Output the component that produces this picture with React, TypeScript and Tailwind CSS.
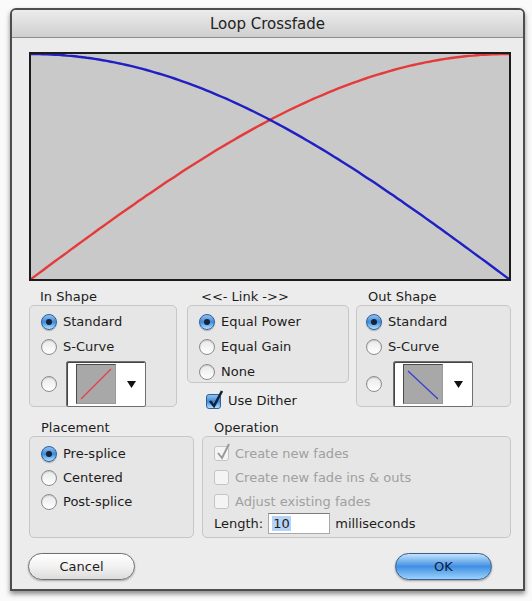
import React from 'react';

const W = 478;
const H = 225;

// equal power crossfade curves
function curve(fn: (t: number) => number) {
  const pts: string[] = [];
  for (let i = 0; i <= 120; i++) {
    const t = i / 120;
    pts.push(`${(t * W).toFixed(1)},${(H * (1 - fn(t))).toFixed(1)}`);
  }
  return pts.join(' ');
}

function Radio({ on }: { on?: boolean }) {
  if (on) {
    return (
      <span className="flex h-[16px] w-[16px] shrink-0 items-center justify-center rounded-full border border-[#2f5f9c] bg-linear-to-b from-[#8fc1ef] via-[#3d8ad8] to-[#b4e2ff] shadow-[0_1px_1px_rgba(0,0,0,0.25)]">
        <span className="h-[6px] w-[6px] rounded-full bg-[#15243a]" />
      </span>
    );
  }
  return (
    <span className="h-[16px] w-[16px] shrink-0 rounded-full border border-[#8c8c8c] bg-linear-to-b from-[#e9e9e9] to-[#ffffff] shadow-[inset_0_1px_1px_rgba(0,0,0,0.15)]" />
  );
}

function RadioRow({ on, label }: { on?: boolean; label: string }) {
  return (
    <div className="flex h-[17px] items-center gap-[6px]">
      <Radio on={on} />
      <span>{label}</span>
    </div>
  );
}

function Check({ on, disabled }: { on?: boolean; disabled?: boolean }) {
  if (disabled) {
    return (
      <span className="relative h-[15px] w-[15px] shrink-0 rounded-[3px] border border-[#c4c4c4] bg-[#f4f4f4]">
        {on && (
          <svg className="absolute -top-[4px] left-[1px]" width="16" height="18" viewBox="0 0 16 18">
            <path d="M2 10 L6 15 L13 1" fill="none" stroke="#9a9a9a" strokeWidth="2" />
          </svg>
        )}
      </span>
    );
  }
  return (
    <span className="relative h-[15px] w-[15px] shrink-0 rounded-[3px] border border-[#2f5f9c] bg-linear-to-b from-[#8fc1ef] via-[#3d8ad8] to-[#b4e2ff]">
      {on && (
        <svg className="absolute -top-[5px] left-[1px]" width="16" height="19" viewBox="0 0 16 19">
          <path d="M2 11 L6 16 L14 1" fill="none" stroke="#14213a" strokeWidth="2.6" />
        </svg>
      )}
    </span>
  );
}

function ShapePicker({ color, down }: { color: string; down?: boolean }) {
  return (
    <div className="flex h-[46px] w-[80px] items-center rounded-[2px] border border-[#6f6f6f] bg-white pl-[9px] shadow-[inset_1px_1px_0_#444]">
      <div className="h-[40px] w-[40px] border border-[#4a4a4a] border-r-[#9a9a9a] border-b-[#9a9a9a] bg-[#a8a8a8]">
        <svg width="38" height="38" viewBox="0 0 38 38">
          {down ? (
            <line x1="4" y1="6" x2="34" y2="34" stroke={color} strokeWidth="1.2" />
          ) : (
            <line x1="4" y1="34" x2="34" y2="4" stroke={color} strokeWidth="1.2" />
          )}
        </svg>
      </div>
      <svg className="ml-[11px]" width="9" height="7" viewBox="0 0 9 7">
        <path d="M0 0 H9 L4.5 7 Z" fill="#111" />
      </svg>
    </div>
  );
}

export default function App() {
  return (
    <div className="h-[601px] w-[532px] overflow-hidden bg-[#fafafa] pl-[10px] pt-[8px] font-['DejaVu_Sans','Liberation_Sans',sans-serif] text-[13px] text-[#1c1c1c]">
      <div className="flex h-[583px] w-[515px] flex-col overflow-hidden rounded-t-[6px] border-2 border-[#4d4d4d] bg-[#ececec] shadow-[0_3px_5px_rgba(0,0,0,0.45)]">
        {/* title bar */}
        <div className="flex h-[28px] shrink-0 items-center justify-center border-b border-[#8e8e8e] bg-linear-to-b from-[#ececec] to-[#cfcfcf] pt-[2px] text-[15px] text-[#222]">
          Loop Crossfade
        </div>

        <div className="flex flex-col pl-[17px] pr-[11px] pt-[14px]">
          {/* graph */}
          <div className="h-[229px] w-[482px] border-2 border-[#1b1b1b] bg-[#c9c9c9]">
            <svg width={W} height={H} viewBox={`0 0 ${W} ${H}`} className="block">
              <polyline points={curve((t) => Math.sin((t * Math.PI) / 2))} fill="none" stroke="#e63a3a" strokeWidth="2.4" />
              <polyline points={curve((t) => Math.cos((t * Math.PI) / 2))} fill="none" stroke="#1f1fc4" strokeWidth="2.4" />
            </svg>
          </div>

          {/* shapes / link */}
          <div className="mt-[8px] flex">
            <div className="flex w-[148px] flex-col">
              <div className="h-[16px] pl-[11px] leading-[16px]">In Shape</div>
              <div className="flex h-[102px] flex-col rounded-[5px] border border-[#c6c6c6] bg-[#e6e6e6] pl-[11px] pt-[7px]">
                <RadioRow on label="Standard" />
                <div className="mt-[8px]">
                  <RadioRow label="S-Curve" />
                </div>
                <div className="mt-[6px] flex items-center gap-[9px]">
                  <Radio />
                  <ShapePicker color="#e0404a" />
                </div>
              </div>
            </div>

            <div className="ml-[10px] flex w-[162px] flex-col">
              <div className="h-[16px] pl-[14px] leading-[16px]">&lt;&lt;- Link -&gt;&gt;</div>
              <div className="flex h-[78px] flex-col rounded-[5px] border border-[#c6c6c6] bg-[#e6e6e6] pl-[11px] pt-[7px]">
                <RadioRow on label="Equal Power" />
                <div className="mt-[8px]">
                  <RadioRow label="Equal Gain" />
                </div>
                <div className="mt-[8px]">
                  <RadioRow label="None" />
                </div>
              </div>
              <div className="mt-[10px] flex h-[16px] items-center gap-[7px] pl-[19px]">
                <Check on />
                <span>Use Dither</span>
              </div>
            </div>

            <div className="ml-[7px] flex w-[155px] flex-col">
              <div className="h-[16px] pl-[12px] leading-[16px]">Out Shape</div>
              <div className="flex h-[102px] flex-col rounded-[5px] border border-[#c6c6c6] bg-[#e6e6e6] pl-[9px] pt-[7px]">
                <RadioRow on label="Standard" />
                <div className="mt-[8px]">
                  <RadioRow label="S-Curve" />
                </div>
                <div className="mt-[6px] flex items-center gap-[11px]">
                  <Radio />
                  <ShapePicker color="#3a3ad0" down />
                </div>
              </div>
            </div>
          </div>

          {/* placement / operation */}
          <div className="mt-[11px] flex">
            <div className="flex w-[165px] flex-col">
              <div className="h-[16px] pl-[12px] leading-[16px]">Placement</div>
              <div className="flex h-[102px] flex-col rounded-[5px] border border-[#c6c6c6] bg-[#e6e6e6] pl-[11px] pt-[8px]">
                <RadioRow on label="Pre-splice" />
                <div className="mt-[7px]">
                  <RadioRow label="Centered" />
                </div>
                <div className="mt-[7px]">
                  <RadioRow label="Post-splice" />
                </div>
              </div>
            </div>

            <div className="ml-[8px] flex w-[309px] flex-col">
              <div className="h-[16px] pl-[12px] leading-[16px]">Operation</div>
              <div className="flex h-[102px] flex-col rounded-[5px] border border-[#c6c6c6] bg-[#e6e6e6] pl-[11px] pt-[8px] text-[#a0a0a0]">
                <div className="flex h-[17px] items-center gap-[6px]">
                  <Check on disabled />
                  <span>Create new fades</span>
                </div>
                <div className="mt-[7px] flex h-[17px] items-center gap-[6px]">
                  <Check disabled />
                  <span>Create new fade ins &amp; outs</span>
                </div>
                <div className="mt-[7px] flex h-[17px] items-center gap-[6px]">
                  <Check disabled />
                  <span>Adjust existing fades</span>
                </div>
                <div className="mt-[3px] flex h-[21px] items-center text-[#1c1c1c]">
                  <span>Length:</span>
                  <div className="ml-[5px] flex h-[21px] w-[62px] items-center border border-[#a8a8a8] border-t-[#7a7a7a] bg-white pl-[3px]">
                    <span className="bg-[#b6d3f5] px-[1px] leading-[15px]">10</span>
                  </div>
                  <span className="ml-[5px]">milliseconds</span>
                </div>
              </div>
            </div>
          </div>

          {/* buttons */}
          <div className="mt-[15px] flex items-center justify-between pr-[20px]">
            <button className="-ml-[1px] flex h-[27px] w-[107px] items-center justify-center rounded-full border border-[#6e6e6e] bg-linear-to-b from-[#ffffff] via-[#f2f2f2] to-[#dcdcdc] text-[13px] text-[#1c1c1c] shadow-[0_1px_2px_rgba(0,0,0,0.3)]">
              Cancel
            </button>
            <button className="flex h-[27px] w-[97px] items-center justify-center rounded-full border border-[#3a5d8e] bg-linear-to-b from-[#c2e2fb] via-[#3f8fe2] to-[#9ad3fc] text-[13px] text-[#10203a] shadow-[0_1px_2px_rgba(0,0,0,0.35)]">
              OK
            </button>
          </div>
        </div>
      </div>
    </div>
  );
}
